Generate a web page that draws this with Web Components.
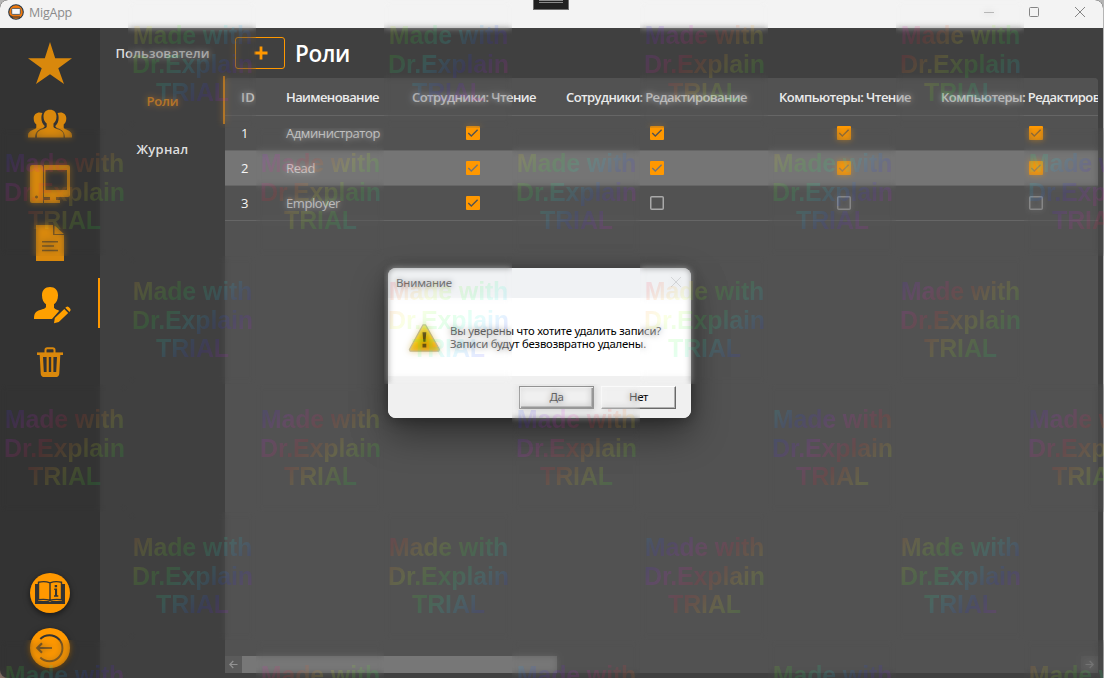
<!DOCTYPE html>
<html lang="ru">
<head>
<meta charset="utf-8">
<title>MigApp</title>
<style>
html,body{margin:0;height:100%;overflow:hidden;background:#b5b5b5}
body{font-family:"Open Sans","Noto Sans",sans-serif}
</style>
</head>
<body>
<mig-app></mig-app>
<script>
const define = (name, markup, setup) => {
  const t = document.createElement('template');
  t.innerHTML = markup;
  customElements.define(name, class extends HTMLElement {
    constructor() {
      super();
      this.attachShadow({mode: 'open'}).append(t.content.cloneNode(true));
    }
    connectedCallback() { if (setup) setup(this, this.shadowRoot); }
  });
};

/* A one-line label whose tracking is adjusted to a given width. */
define('fit-text', `<style>:host{display:inline-block;white-space:nowrap}span{display:inline-block}</style><span><slot></slot></span>`, (el, root) => {
  const w = +el.getAttribute('w'), s = root.querySelector('span');
  if (!w) return;
  const n = el.textContent.length, cur = s.getBoundingClientRect().width;
  s.style.letterSpacing = ((w - cur) / n).toFixed(3) + 'px';
});

define('title-bar', `<style>
:host{display:flex;height:28px;background:#f3f3f3;align-items:center;padding:0 16px 0 8px;color:#8b8b8b;font-size:12.5px;border-radius:8px 8px 0 0;box-sizing:border-box}
.logo{margin:-4px 5px 0 0}
fit-text{margin-top:-3px}
.b{margin-left:auto;display:block;margin-top:-4px}
</style>
<svg class="logo" width="16" height="16" viewBox="0 0 16 16"><circle cx="8" cy="8" r="7.3" fill="#f37a0c" stroke="#26394a" stroke-width="1.1"/><rect x="3.7" y="4.4" width="8.6" height="6" rx="1" fill="#f4f7fa" stroke="#3a4650" stroke-width=".8"/><path d="M4 13h8M2.500 11.500l2 1.500" stroke="#222d38" fill="none"/></svg>
<fit-text w="43">MigApp</fit-text>
<svg class="b" width="104" height="14" viewBox="983 5 104 14" fill="none" stroke="#858585"><path d="M984 12.500h10"/><rect x="1029.500" y="7.500" width="9" height="9" rx="1"/><path d="M1075 7l10 10M1085 7l-10 10"/></svg>`);

define('capture-handle', `<style>:host{display:flex;flex-direction:column;gap:1px;justify-content:flex-start;align-items:center;width:34px;height:9px;background:#202020;border:1px solid #707070;border-top:0}
i{width:24px;height:1px;background:#8a8a8a}i:first-child{margin-top:2px}</style><i></i><i></i>`);

define('icon-rail', `<style>
:host{display:flex;flex-direction:column;width:100px;background:#333;box-sizing:border-box;padding-top:5px;color:#d9880c;flex:none}
div{display:flex;height:60px;justify-content:center;align-items:center;box-sizing:border-box}
.on{color:#ffa000;position:relative}
.on::after{content:"";position:absolute;right:0;top:5px;width:2px;height:50px;background:#ff9800}
.end{margin-top:auto;height:55px}.end+div{height:55px;margin-bottom:3px}
svg{display:block;fill:currentColor;overflow:visible}
.fab{fill:#ff9800;filter:drop-shadow(0 2px 3px rgba(0,0,0,.55))}
</style>
<div><svg width="60" height="60" viewBox="20 33 60 60"><path d="M50 42l5.200 16.300H72L58.300 68.200 64 84 50 74.200 36 84l5.700-15.800L28 58.300h16.800z"/></svg></div>
<div><svg width="60" height="60" viewBox="20 93 60 60">
<path d="M50 109.700c4 0 6.500 2.600 6.500 6.800 0 3.200-1.200 5.600-3 7v3.200c0 2.500 10 2.300 10 8v2.800H37v-2.800c0-5.700 9.700-5.500 9.700-8v-3.200c-1.800-1.400-3.200-3.800-3.200-7 0-4.200 2.500-6.800 6.500-6.800z"/>
<path d="M42.500 113c-4.500-1.800-8.800.6-8.800 5.300 0 2.800.8 5 2.600 6.200v3c0 2.300-8.300 2.300-8.300 8v2h7c.2-5.800 3.200-7.700 7.300-9.200 1.200-.5 2.400-1.200 2.400-2.300-2.300-2-3.300-4.700-3.300-8 0-2 .3-3.600 1.100-5z"/>
<path d="M42.500 113c-4.500-1.800-8.800.6-8.800 5.300 0 2.800.8 5 2.600 6.200v3c0 2.300-8.300 2.300-8.300 8v2h7c.2-5.800 3.200-7.700 7.300-9.200 1.200-.5 2.400-1.200 2.400-2.300-2.300-2-3.300-4.700-3.300-8 0-2 .3-3.600 1.100-5z" transform="matrix(-1 0 0 1 100 0)"/></svg></div>
<div><svg width="60" height="60" viewBox="20 153 60 60"><path fill-rule="evenodd" d="M32 165h9q2 0 2 2v36H32q-2 0-2-2v-34q0-2 2-2zm4.500 30.500a1.500 1.500 0 1 0 .01 0zM44 165h24q2 0 2 2v28q0 2-2 2H44zm1.500 5v20H67v-20zM50 197h6v3h4v3H44v-3h6z"/></svg></div>
<div><svg width="60" height="60" viewBox="20 213 60 60"><path fill-rule="evenodd" d="M36 225h17v10h11v26H36zM42 241v1.500h16V241zm0 4.300v1.500h12v-1.500zm0 4.500v1.500h16v-1.500zM54.500 225.500L64 234h-9.500z"/></svg></div>
<div class="on"><svg width="60" height="60" viewBox="20 273 60 60"><path d="M50 287c5 0 8 3.200 8 8.300 0 4.200-1.500 7.200-4 9v3.500c1 1.500 3 2 5.300 3L52 319H34c0-5.500 1.500-7.600 6-9 3-1 6-1.500 6-3.500v-2.200c-2.500-1.800-4-4.800-4-9 0-5.100 3-8.300 8-8.300zM65.300 307.800l4.200 4.200 1-1.400q.5-1.200-.6-2.300l-1.300-1.200q-1.200-1-2.300-.2zM64.300 309l3.900 4-9.400 8.900-4.800 1.400.8-5.200z"/></svg></div>
<div><svg width="60" height="60" viewBox="20 333 60 60"><g fill="none" stroke="currentColor"><path stroke-width="2.600" d="M37 353.700h26"/><path stroke-width="2" d="M45.500 353v-3q0-1.800 1.800-1.800h5.400q1.800 0 1.800 1.800v3"/><path stroke-width="3.200" d="M41.300 355l1 18.500q.2 2 2.200 2h11q2 0 2.200-2l1-18.500"/><path stroke-width="2.200" d="M47.700 357v15.500M52.300 357v15.500"/></g><path d="M40 353h20v4H40zM42 372h16v3H42z"/></svg></div>
<div class="end"><svg class="fab" width="40" height="40" viewBox="30 573 40 40"><circle cx="50" cy="593" r="20"/><path d="M35 584h3v17h10.500l1.500 1 1.500-1H62v-17h3v20H35z" fill="#333"/><path d="M38.500 582.300q6-1.500 11.500.5v17.500q-5.500-1.500-11.500-.5zM61.500 582.300q-6-1.500-11.500.5v17.500q5.500-1.500 11.500-.5z" fill="none" stroke="#333" stroke-width="1.400"/><path d="M54.300 588.500h2.800v6.800h1.200v1.500h-4.300v-1.500h1v-5.200h-.8zM54.700 585h2.400v2.200h-2.400z" fill="#333"/></svg></div>
<div><svg class="fab" width="40" height="40" viewBox="30 628 40 40"><circle cx="50" cy="648" r="20"/><path d="M40.300 639a13 13 0 1 1 0 18.500" fill="none" stroke="#333" stroke-width="2"/><path d="M52 648H37.500M42 643.300L37.300 648l4.700 4.700" fill="none" stroke="#333" stroke-width="2.200"/></svg></div>`);

define('side-nav', `<style>
:host{display:flex;flex-direction:column;width:125px;background:#404040;box-sizing:border-box;color:#dedede;font-weight:600;font-size:13px;flex:none}
div{height:48px;display:flex;align-items:center;justify-content:center;box-sizing:border-box}
.on{color:#f0921a;border-right:2px solid #f29111;padding-left:2px}
fit-text{margin-top:1px}
</style><div><fit-text w="94">Пользователи</fit-text></div><div class="on"><fit-text w="32">Роли</fit-text></div><div><fit-text w="52">Журнал</fit-text></div>`);

define('page-head', `<style>
:host{display:flex;height:50px;align-items:center;padding:0 10px;gap:10px;color:#fff;font-weight:600;font-size:22.500px;box-sizing:border-box;flex:none}
button{width:50px;height:32px;border:1px solid #ff9800;border-radius:3px;background:none;padding:0 0 0 2px;display:grid;place-items:center;box-sizing:border-box}
</style><button aria-label="Добавить"><svg width="14" height="14" viewBox="0 0 14 14"><path d="M7 .5v13M.5 7h13" stroke="#ff9800" stroke-width="2.800"/></svg></button><fit-text w="55">Роли</fit-text>`);

define('check-box', `<style>:host{display:block;width:14px;height:14px}svg{display:block}.off,:host([on]) .on{display:block}.on,:host([on]) .off{display:none}</style>
<svg class="on" width="14" height="14" viewBox="0 0 14 14"><rect width="14" height="14" rx="1" fill="#ff9800"/><path d="M2.300 7l3 3L11.600 3.800" fill="none" stroke="var(--row,#525252)" stroke-width="1.400"/></svg>
<svg class="off" width="14" height="14" viewBox="0 0 14 14"><rect x=".75" y=".75" width="12.500" height="12.500" rx="1" fill="none" stroke="#a9a9a9" stroke-width="1.500"/></svg>`);

define('role-row', `<style>
:host{display:grid;grid-template-columns:45px 126px 154px 213px 162px 221px;height:35px;box-sizing:border-box;border-bottom:1px solid #666;align-items:center;color:#f6f6f6;font-size:13px;background:var(--row,#525252)}
:host([head]){height:38px;font-weight:600;color:#ebebeb}
:host([sel]){--row:#757575}
slot{display:contents}
::slotted(fit-text){margin-left:16px}
::slotted(check-box){justify-self:center}
</style><slot></slot>`);

define('scroll-bar', `<style>
:host{display:flex;height:17px;background:#525252;flex:none}
b{width:17px;display:grid;place-items:center;background:#5b5b5b}
i{width:315px;background:#777;margin-right:auto}
</style><b><svg width="9" height="9" viewBox="0 0 9 9" fill="none" stroke="#929292" stroke-width="1.200"><path d="M8.500 4.500H1M4.300 1L.8 4.500 4.300 8"/></svg></b><i></i><b><svg width="9" height="9" viewBox="0 0 9 9" fill="none" stroke="#858585" stroke-width="1.200"><path d="M.5 4.500H8M4.700 1l3.500 3.500L4.700 8"/></svg></b>`);

define('role-table', `<style>
:host{display:flex;flex-direction:column;flex:1;background:#525252;margin:0 5px 5px 0;overflow:hidden;border-radius:4px 4px 0 0}
scroll-bar{margin-top:auto}
</style>
<role-row head><fit-text w="14">ID</fit-text><fit-text w="93">Наименование</fit-text><fit-text w="124">Сотрудники: Чтение</fit-text><fit-text w="181">Сотрудники: Редактирование</fit-text><fit-text w="132">Компьютеры: Чтение</fit-text><fit-text w="189">Компьютеры: Редактирование</fit-text></role-row>
<role-row><fit-text>1</fit-text><fit-text w="94">Администратор</fit-text><check-box on></check-box><check-box on></check-box><check-box on></check-box><check-box on></check-box></role-row>
<role-row sel><fit-text>2</fit-text><fit-text w="29">Read</fit-text><check-box on></check-box><check-box on></check-box><check-box on></check-box><check-box on></check-box></role-row>
<role-row><fit-text>3</fit-text><fit-text w="54">Employer</fit-text><check-box on></check-box><check-box></check-box><check-box></check-box><check-box></check-box></role-row>
<scroll-bar></scroll-bar>`);

define('classic-button', `<style>
:host{display:grid;place-items:center;width:75px;height:23px;box-sizing:border-box;border:1px solid;border-color:#fff #696969 #696969 #fff;background:#f0f0f0;box-shadow:inset -1px -1px #b0b0b0;padding-bottom:2px}
:host([primary]){border:1px solid #646464;box-shadow:inset 1px 1px #fff,inset -1px -1px #696969,inset -2px -2px #a8a8a8}
</style><slot></slot>`);

define('message-box', `<style>
:host{display:flex;flex-direction:column;width:303px;height:150px;border-radius:8px;overflow:hidden;color:#000;font:11.500px "Noto Sans",sans-serif;box-shadow:0 16px 36px rgba(0,0,0,.42),0 2px 14px rgba(0,0,0,.3);background:#fff}
header{height:30px;background:#f0f2f4;display:flex;align-items:center;justify-content:space-between;padding:0 9px 2px 8px;color:#222;box-sizing:border-box}
main{height:78px;display:flex;align-items:center;padding:1px 0 0 20px;gap:9px;box-sizing:border-box}
p{margin:-1px 0 0;line-height:13px;display:flex;flex-direction:column;font-size:11.300px}
footer{flex:1;background:#f0f0f0;display:flex;justify-content:flex-end;gap:7px;padding:10px 15px 0 0;align-items:flex-start}
</style>
<header><fit-text w="56">Внимание</fit-text><svg width="12" height="12" viewBox="0 0 12 12" stroke="#bdbfc1" fill="none"><path d="M1 1l10 10M11 1L1 11"/></svg></header>
<main><svg width="33" height="30" viewBox="0 0 33 30"><defs><linearGradient id="g" x1="0" y1="0" x2=".3" y2="1"><stop offset="0" stop-color="#ffe95a"/><stop offset=".55" stop-color="#f5cf05"/><stop offset="1" stop-color="#f0a800"/></linearGradient></defs><path d="M15 1.800h2.500L31.500 26.500l-.8 1.700H2.200l-.8-1.700z" fill="url(#g)" stroke="#a19a80" stroke-width="1.300" stroke-linejoin="round"/><path d="M14.500 9.300h3.800l-.8 9.500h-2.200zM14.500 20.800h3.800v3.600h-3.800z" fill="#111"/></svg>
<p><fit-text w="211">Вы уверены что хотите удалить записи?</fit-text><fit-text w="196">Записи будут безвозвратно удалены.</fit-text></p></main>
<footer><classic-button primary><fit-text w="14">Да</fit-text></classic-button><classic-button><fit-text w="19">Нет</fit-text></classic-button></footer>`);

/* A 128px tile: softened backdrop with a rainbow caption over it. */
define('trial-stamp', `<style>
:host{display:block;position:relative;width:128px;height:128px;overflow:hidden}
.soft{position:absolute;inset:0;backdrop-filter:blur(3px);opacity:.5}
p{position:relative;margin:0;box-sizing:border-box;width:128px;height:128px;padding:21px 0 0 1px;text-align:center;font:bold 25px/28.500px "Liberation Sans",Arial,sans-serif;color:transparent;-webkit-background-clip:text;background-clip:text;opacity:.115;letter-spacing:-.15px;white-space:nowrap}
</style><div class="soft"></div><p>Made with<br>Dr.Explain<br>TRIAL</p>`, (el, root) => {
  const h = +el.getAttribute('hue') - 50, stops = [];
  for (let i = 0; i <= 12; i++) stops.push('hsl(' + (h + i * 32) + ',95%,55%)');
  root.querySelector('p').style.backgroundImage = 'linear-gradient(135deg,' + stops.join(',') + ')';
});

define('trial-layer', `<style>:host{display:grid;grid-template-columns:repeat(9,128px);grid-auto-rows:128px;pointer-events:none}</style>`, (el, root) => {
  [[1,0,42],[3,0,70],[5,0,240],[7,0,310],
   [0,1,245],[2,1,280],[4,1,55],[6,1,55],[8,1,140],
   [1,2,45],[3,2,350],[5,2,350],[7,2,260],
   [0,3,245],[2,3,245],[4,3,225],[6,3,185],[8,3,245],
   [1,4,30],[3,4,350],[5,4,210],[7,4,30],
   [0,5,100],[2,5,310],[4,5,200],[6,5,90],[8,5,30]].forEach(([x, y, hue]) => {
    const s = document.createElement('trial-stamp');
    s.setAttribute('hue', hue);
    s.style.gridArea = (y + 1) + '/' + (x + 1);
    root.append(s);
  });
});

define('mig-app', `<style>
:host{display:block;position:relative;width:1104px;height:678px;overflow:hidden}
.win{display:flex;flex-direction:column;width:1103px;height:678px;background:#404040;border-radius:8px 8px 0 0;overflow:hidden}
.body{display:flex;flex:1;min-height:0;background:linear-gradient(90deg,#8a7468 12px,#404040 12px)}
.page{display:flex;flex-direction:column;flex:1;min-width:0;background:#404040}
icon-rail{border-bottom-left-radius:8px}
capture-handle{position:absolute;left:533px;top:0}
message-box{position:absolute;left:388px;top:268px}
trial-layer{position:absolute;left:0;top:0}
</style>
<div class="win"><title-bar></title-bar><div class="body"><icon-rail></icon-rail><side-nav></side-nav><div class="page"><page-head></page-head><role-table></role-table></div></div></div>
<capture-handle></capture-handle><message-box></message-box><trial-layer></trial-layer>`);
</script>
</body>
</html>
